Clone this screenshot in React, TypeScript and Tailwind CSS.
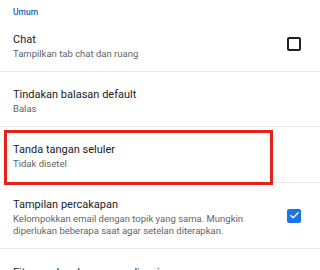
import { Check } from 'lucide-react';

type Row = {
  title: string;
  subtitle: string;
  checkbox?: 'on' | 'off';
  highlight?: boolean;
  height: string;
};

const ROWS: Row[] = [
  { title: 'Chat', subtitle: 'Tampilkan tab chat dan ruang', checkbox: 'off', height: 'h-[55px]' },
  { title: 'Tindakan balasan default', subtitle: 'Balas', height: 'h-[55px]' },
  { title: 'Tanda tangan seluler', subtitle: 'Tidak disetel', highlight: true, height: 'h-[56px]' },
  {
    title: 'Tampilan percakapan',
    subtitle:
      'Kelompokkan email dengan topik yang sama. Mungkin diperlukan beberapa saat agar setelan diterapkan.',
    checkbox: 'on',
    height: 'h-[66px]',
  },
];

const SettingRow = ({ row }: { row: Row }) => (
  <div className={`relative flex items-center border-b border-[#e8eaed] pl-[13px] pr-[19px] ${row.height}`}>
    <div className="flex-1 pr-4 pt-[3px]">
      <div className="text-[11px] leading-[16px] text-[#202124]">{row.title}</div>
      <div className="text-[9.5px] leading-[12px] text-[#5f6368] max-w-[240px]">{row.subtitle}</div>
    </div>
    {row.checkbox === 'off' && (
      <div className="w-[14px] h-[14px] rounded-[2px] border-2 border-[#202124]" />
    )}
    {row.checkbox === 'on' && (
      <div className="w-[14px] h-[14px] rounded-[2px] bg-[#1a73e8] flex items-center justify-center">
        <Check size={11} strokeWidth={3} className="text-white" />
      </div>
    )}
    {row.highlight && (
      <div className="absolute left-[4px] top-[3px] w-[269px] h-[55px] border-[3px] border-[#e2231a]" />
    )}
  </div>
);

const App = () => {
  return (
    <div className="w-[320px] h-[270px] overflow-hidden bg-white font-['Roboto',sans-serif]">
      <div className="h-[17px] pl-[13px] pt-[7px] text-[8.5px] leading-[10px] font-medium text-[#1a5fb4]">
        Umum
      </div>
      {ROWS.map((row) => (
        <SettingRow key={row.title} row={row} />
      ))}
      <div className="pl-[13px] pt-[16px] text-[11px] leading-[15px] text-[#202124]">
        Fitur cerdas dan personalisasi
      </div>
    </div>
  );
};

export default App;
